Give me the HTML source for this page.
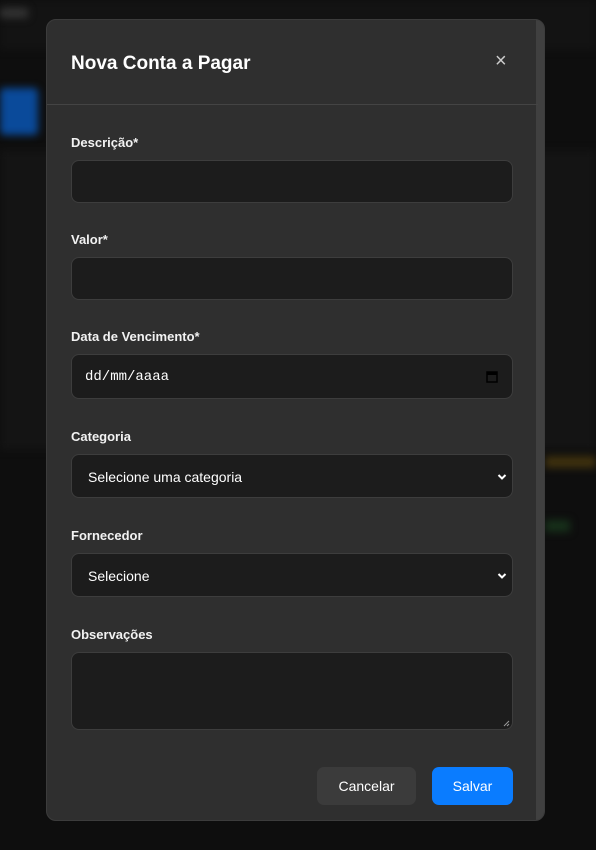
<!DOCTYPE html>
<html><head><meta charset="utf-8"><style>
*{box-sizing:border-box;margin:0;padding:0}
body{width:596px;height:850px;overflow:hidden;background:#0e0e0e;font-family:"Liberation Sans",sans-serif;position:relative}
.bg{position:absolute;filter:blur(4px)}
.modal{position:absolute;left:46px;top:19px;width:499px;height:802px;background:#2f2f2f;border:1px solid #3c3c3c;border-radius:10px;overflow:hidden}
.sb{position:absolute;right:0;top:0;width:8px;height:100%;background:#404040}
.hdr{position:absolute;left:0;top:0;width:491px;height:85px;border-bottom:1px solid #444}
.title{position:absolute;left:24px;top:33px;font-size:19px;font-weight:bold;color:#fff}
.x{position:absolute;left:448px;top:30px;font-size:20px;color:#ccc}
.lbl{position:absolute;left:24px;font-size:13px;font-weight:bold;color:#f2f2f2}
.in{position:absolute;left:24px;width:442px;background:#1c1c1c;border:1px solid #3d3d3d;border-radius:8px;color:#fff;font-size:14px}
.btn{position:absolute;top:747px;height:38px;border-radius:7px;color:#fff;font-size:14px;text-align:center;line-height:38px}
</style></head><body>
<div class="bg" style="left:0;top:0;width:596px;height:50px;background:#131313"></div>
<div class="bg" style="left:0;top:8px;width:28px;height:10px;background:#333"></div>
<div class="bg" style="left:0;top:88px;width:38px;height:47px;background:#0a4a9a;border-radius:4px"></div>
<div class="bg" style="left:0;top:150px;width:596px;height:300px;background:#141414"></div>
<div class="bg" style="left:545px;top:456px;width:51px;height:12px;background:#3f310e"></div>
<div class="bg" style="left:545px;top:520px;width:25px;height:12px;background:#17301a"></div>
<div class="modal">
<div class="sb"></div>
<div class="hdr"><div class="title">Nova Conta a Pagar</div><div class="x">×</div></div>
<div class="lbl" style="top:115px">Descrição*</div>
<div class="in" style="top:140px;height:43px"></div>
<div class="lbl" style="top:212px">Valor*</div>
<div class="in" style="top:237px;height:43px"></div>
<div class="lbl" style="top:309px">Data de Vencimento*</div>
<div class="in" style="top:334px;height:45px;font-family:'Liberation Mono',monospace;padding:14px 0 0 13px">dd/mm/aaaa
<svg style="position:absolute;right:14px;top:15px" width="12" height="13" viewBox="0 0 12 13"><rect x="1" y="2" width="10" height="10" fill="none" stroke="#000" stroke-width="1.5"/><rect x="1" y="2" width="10" height="3" fill="#000"/></svg></div>
<div class="lbl" style="top:409px">Categoria</div>
<div class="in" style="top:434px;height:44px;padding:14px 0 0 16px">Selecione uma categoria<svg style="position:absolute;right:5px;top:18px" width="10" height="8" viewBox="0 0 10 8"><path d="M1.5 2l3.5 3.5 3.5-3.5" fill="none" stroke="#fff" stroke-width="2"/></svg></div>
<div class="lbl" style="top:508px">Fornecedor</div>
<div class="in" style="top:533px;height:44px;padding:14px 0 0 16px">Selecione<svg style="position:absolute;right:5px;top:18px" width="10" height="8" viewBox="0 0 10 8"><path d="M1.5 2l3.5 3.5 3.5-3.5" fill="none" stroke="#fff" stroke-width="2"/></svg></div>
<div class="lbl" style="top:607px">Observações</div>
<div class="in" style="top:632px;height:78px"><svg style="position:absolute;right:2px;bottom:2px" width="7" height="7"><path d="M1 6L6 1M4 6L6 4" stroke="#999" stroke-width="1"/></svg></div>
<div class="btn" style="left:270px;width:99px;background:#3b3b3b">Cancelar</div>
<div class="btn" style="left:385px;width:81px;background:#0a7cff">Salvar</div>
</div>
</body></html>
